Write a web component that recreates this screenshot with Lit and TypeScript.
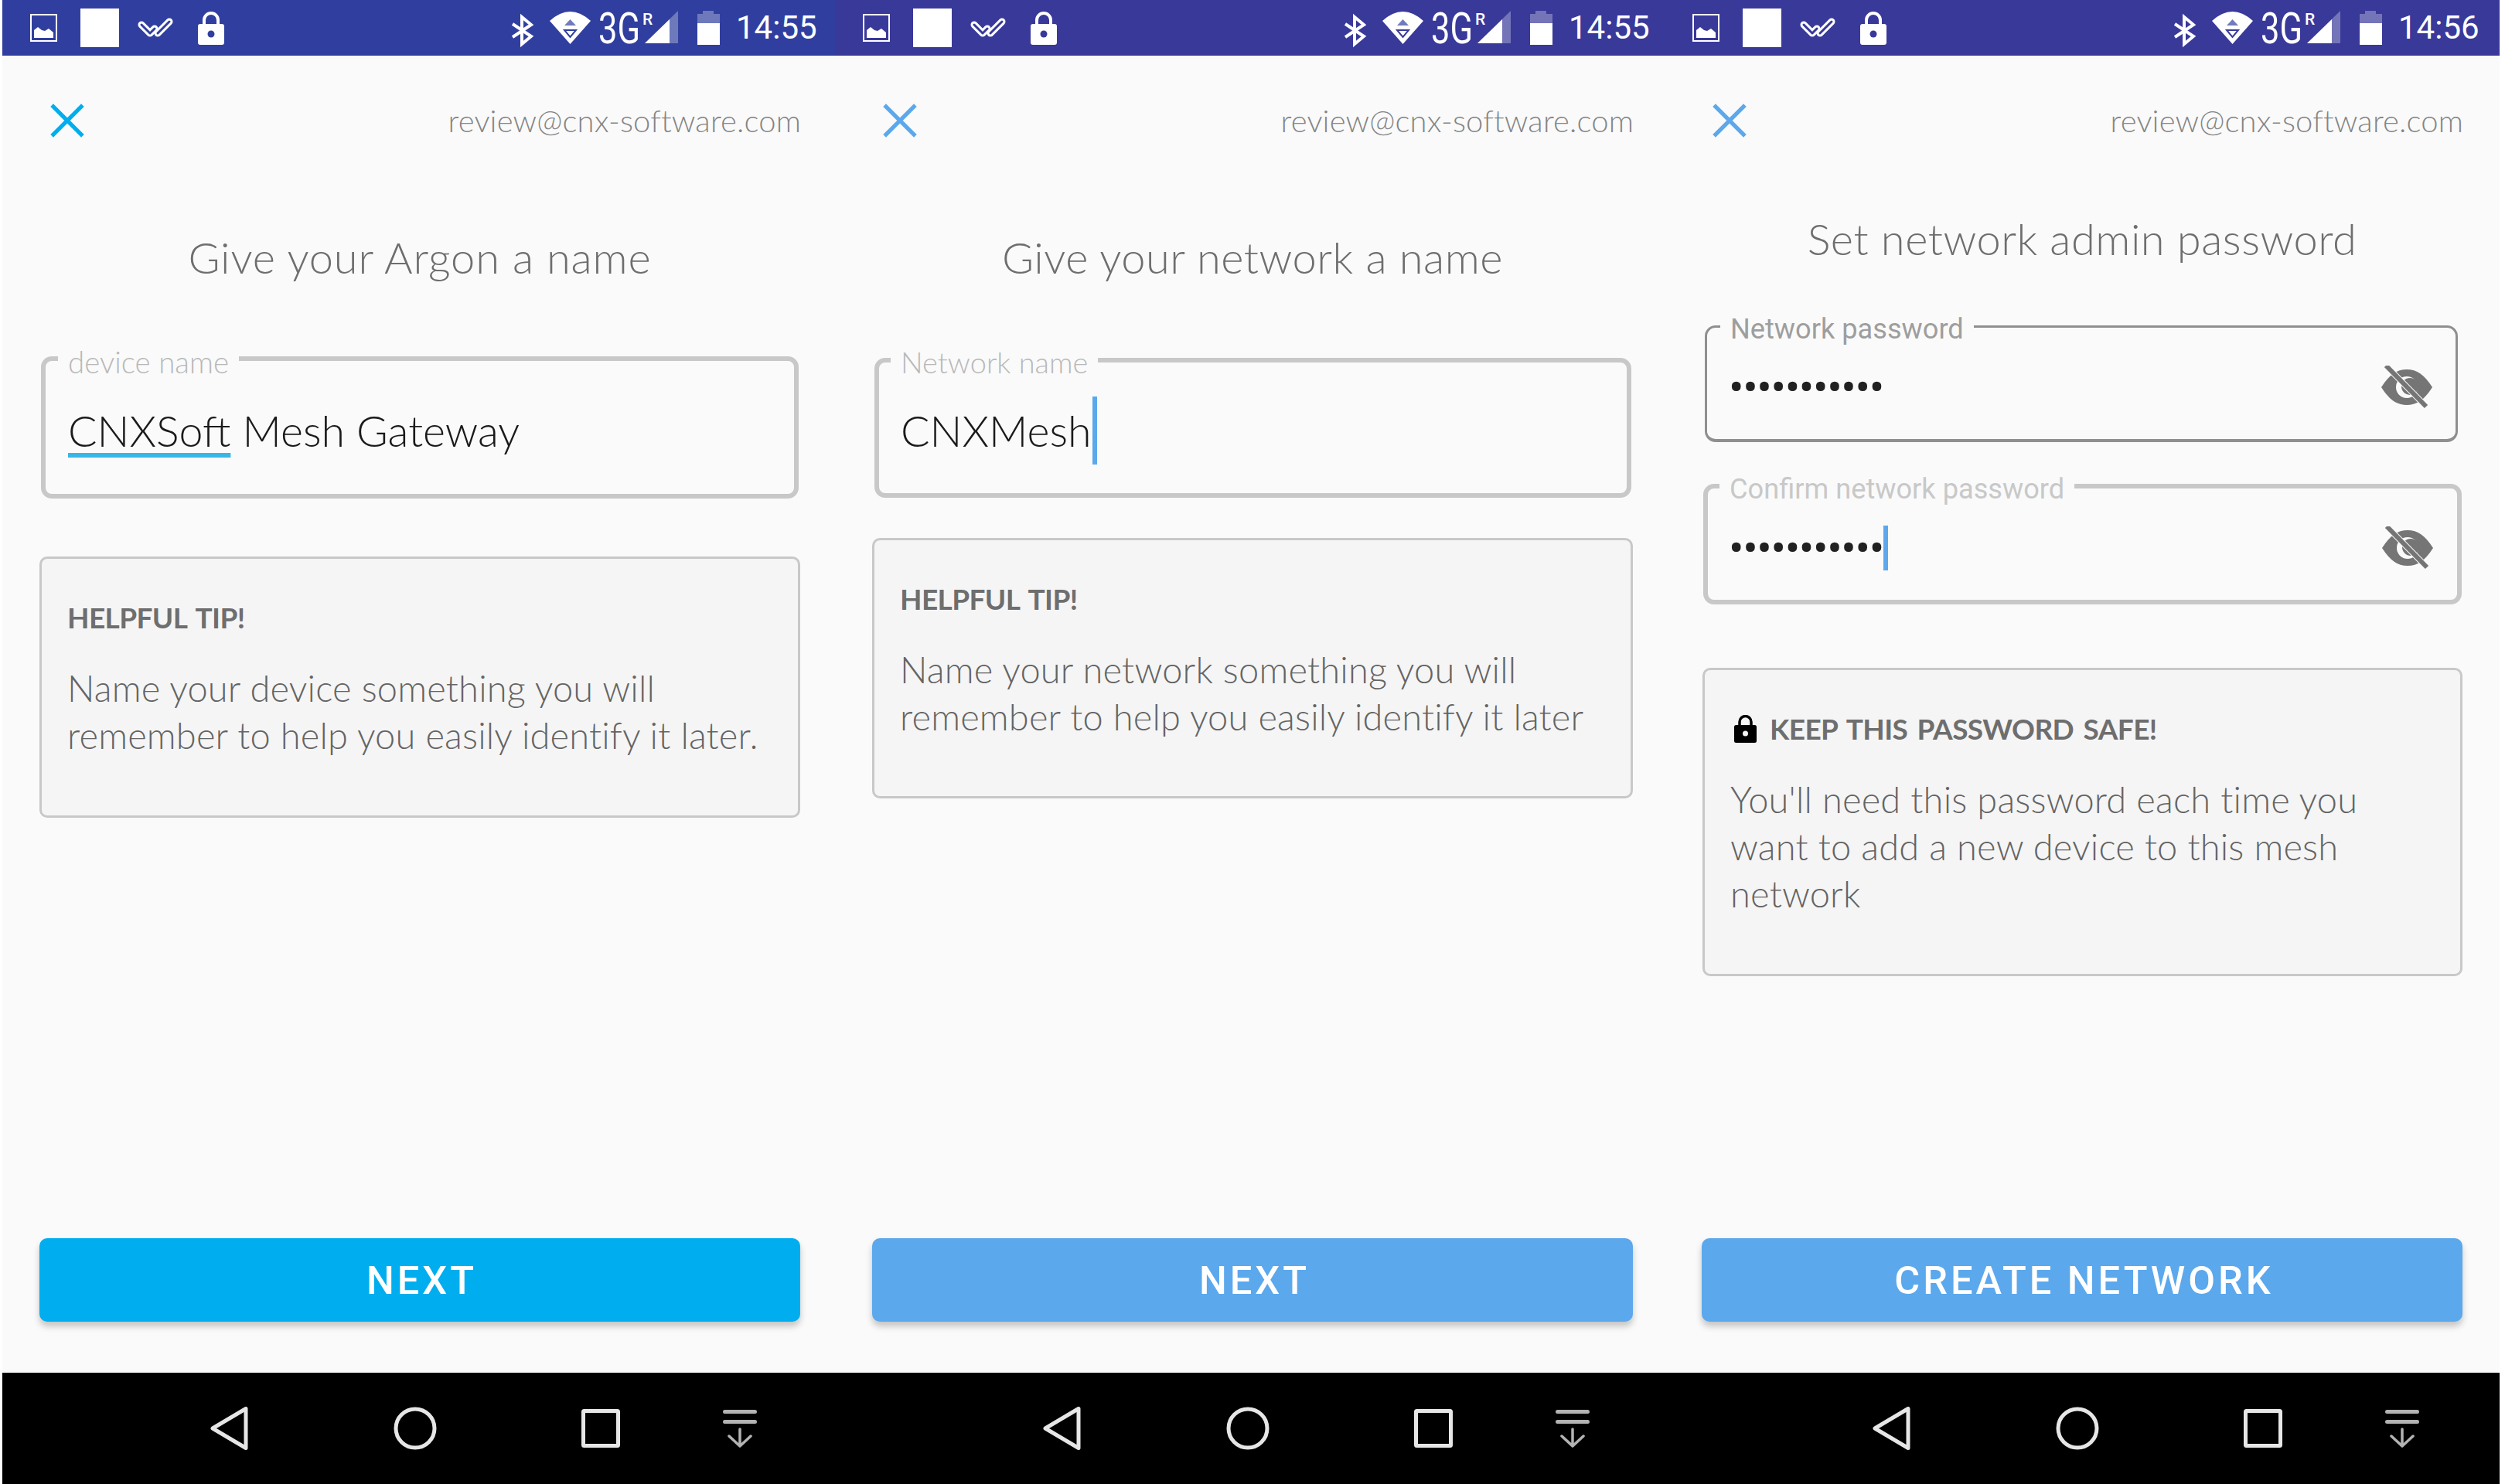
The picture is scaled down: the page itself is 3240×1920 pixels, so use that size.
import { LitElement, html, css, svg } from "lit";
import { customElement } from "lit/decorators.js";

const eye = svg`<svg class="eye" width="66" height="56" viewBox="0 0 66 56">
  <path d="M0 28 C10 12 20 5 33 5 C46 5 56 12 66 28 C56 44 46 51 33 51 C20 51 10 44 0 28Z" fill="#757575"/>
  <circle cx="33" cy="28" r="14" fill="#fafafa"/>
  <circle cx="37" cy="27" r="11" fill="#757575"/>
  <path d="M6 0 L58 53" stroke="#fafafa" stroke-width="8"/>
  <path d="M6 0 L58 53" stroke="#757575" stroke-width="6"/>
</svg>`;

function statusBar(time: string) {
  return html`<div class="status">
    <svg class="i-img" width="35" height="36" viewBox="0 0 35 36">
      <rect x="1" y="1" width="33" height="34" fill="none" stroke="#fff" stroke-width="2"/>
      <path d="M5 31 V21 L10 17 L15 21 L19 22 L24 19 L30 24 V31Z" fill="#fff"/>
    </svg>
    <div class="sq"></div>
    <svg class="i-check" width="46" height="26" viewBox="0 0 46 26">
      <g fill="none" stroke-linecap="round" stroke-linejoin="round">
        <path d="M5 9 L16 20 L22 14" stroke="#fff" stroke-width="9"/>
        <path d="M26 20 L41 5" stroke="#fff" stroke-width="9"/>
        <path d="M5 9 L16 20 L22 14" class="bar-s" stroke-width="3"/>
        <path d="M26 20 L41 5" class="bar-s" stroke-width="3"/>
      </g>
    </svg>
    <svg class="i-lock" width="34" height="44" viewBox="0 0 34 44">
      <path d="M8 20 V12 a9 9 0 0 1 18 0 V20" fill="none" stroke="#fff" stroke-width="4"/>
      <rect x="0" y="17" width="34" height="27" rx="3" fill="#fff"/>
      <circle cx="17" cy="30" r="4.5" class="bar-f"/>
    </svg>
    <svg class="cluster" width="270" height="72" viewBox="0 0 270 72">
      <path d="M1 31 L25 47 L13 57 V22 L25 32 L1 48" fill="none" stroke="#fff" stroke-width="4"/>
      <path d="M49 27 Q75.5 3 102 27 L75.5 57 Z" fill="#fff"/>
      <path d="M68 33 H83 L75.5 25Z" fill="#727bbd"/>
      <path d="M68 39 H83 L75.5 48Z" fill="#fff" class="bar-s" stroke-width="2"/>
      <text class="t3g" x="112" y="56" textLength="54" lengthAdjust="spacingAndGlyphs">3G</text>
      <text class="tr" x="169" y="32">R</text>
      <path d="M172 56 L215 14 V56Z" fill="#fff" opacity=".3"/>
      <path d="M172 56 L204 25 V56Z" fill="#fff"/>
      <path d="M247 14 H261 V18 H269 V30 H240 V18 H247Z" fill="#fff" opacity=".3"/>
      <rect x="240" y="30" width="29" height="28" fill="#fff"/>
    </svg>
    <span class="time">${time}</span>
  </div>`;
}

const nav = html`<div class="nav">
  <svg width="49" height="56" viewBox="0 0 49 56"><path d="M46 2.5 V53.5 L3 28Z" fill="none" stroke="#e6e6e6" stroke-width="5" stroke-linejoin="round"/></svg>
  <svg class="n-c" width="56" height="56" viewBox="0 0 56 56"><circle cx="28" cy="28" r="25" fill="none" stroke="#e6e6e6" stroke-width="5"/></svg>
  <svg class="n-s" width="50" height="50" viewBox="0 0 50 50"><rect x="2.5" y="2.5" width="45" height="45" rx="1" fill="none" stroke="#e6e6e6" stroke-width="5"/></svg>
  <svg class="n-m" width="44" height="49" viewBox="0 0 44 49">
    <path d="M2.5 2.5 H41.5 M2.5 15.5 H41.5" stroke="#b3b3b3" stroke-width="5" stroke-linecap="round"/>
    <path d="M22 25 V46 M8 34 L22 47 L36 34" fill="none" stroke="#b3b3b3" stroke-width="3.5" stroke-linecap="round" stroke-linejoin="round"/>
  </svg>
</div>`;

function header(color: string) {
  return html`<div class="head">
    <svg width="44" height="44" viewBox="0 0 42 42" style="color:${color}"><path d="M2 2 L40 40 M40 2 L2 40" fill="none" stroke="currentColor" stroke-width="5"/></svg>
    <span class="email">review@cnx-software.com</span>
  </div>`;
}

@customElement("app-root")
export class AppRoot extends LitElement {
  static styles = css`
    :host { display: block; width: 3240px; height: 1920px; background: #fff; overflow: hidden; }
    .row { display: flex; padding-left: 3px; align-items: stretch; }
    .panel { flex: 0 0 1080px; width: 1080px; height: 1920px; background: #fafafa; display: flex; flex-direction: column; box-sizing: border-box;
      font-family: Lato, "Noto Sans", sans-serif; color: #757575; --bar: #303f9f; }
    .p1 { margin-right: -3px; }
    .p2 { margin-right: -7px; --bar: #39399a; }
    .p3 { --bar: #39399a; }
    .bar-s { stroke: var(--bar); }
    .bar-f { fill: var(--bar); }

    .status { height: 72px; flex: none; background: var(--bar); display: flex; align-items: center; padding-left: 36px; box-sizing: border-box; }
    .sq { width: 50px; height: 50px; background: #fff; margin-left: 30px; }
    .i-check { margin-left: 24px; }
    .i-lock { margin-left: 32px; }
    .cluster { margin-left: 372px; flex: none; }
    .t3g { font: 400 56px Roboto, sans-serif; fill: #fff; }
    .tr { font: 500 21px Roboto, sans-serif; fill: #fff; }
    .time { font: 400 42px/72px Roboto, sans-serif; color: #fff; margin-left: 20px; white-space: nowrap; }

    .head { display: flex; justify-content: space-between; align-items: center; padding: 62px 47px 0 62px; height: 44px; flex: none; }
    .email { font-size: 40px; font-weight: 300; color: #858585; line-height: 42px; letter-spacing: .15px; }

    .title { text-align: center; font-size: 56px; font-weight: 300; line-height: 60px; color: #6e6e6e; letter-spacing: .5px; flex: none; white-space: nowrap; }
    .title.t12 { margin-top: 125px; }
    .title.t3 { margin-top: 101px; }
    .title.wide { letter-spacing: .85px; }

    .field { position: relative; box-sizing: border-box; flex: none; border: 6px solid #c8c8c8; border-radius: 14px; display: flex; align-items: center; }
    .legend { position: absolute; top: -19px; left: 16px; padding: 0 13px; background: #fafafa; line-height: 40px; font-size: 38.5px; font-weight: 300; color: #b8b8b8; white-space: nowrap; }
    .value { font-size: 55.5px; font-weight: 300; color: #1a1a1a; line-height: 60px; white-space: nowrap; display: flex; align-items: center; }
    .f1 { height: 184px; margin: 98px 50px 0 50px; padding: 8px 0 0 29px; }
    .f2 { height: 181px; margin: 100px 50px 0 51px; padding: 6px 0 0 28px; }
    .f2 .legend { font-size: 38px; left: 15px; top: -21px; }
    .under { text-decoration: underline; text-decoration-color: #38b6e8; text-decoration-thickness: 6px; text-underline-offset: 8px; text-decoration-skip-ink: none; }
    .caret { display: inline-block; width: 6px; background: #5ba8ec; flex: none; }
    .value .caret { height: 88px; margin-left: 1px; }
    .pw .legend { font-family: Roboto, sans-serif; font-weight: 400; font-size: 36.2px; left: 15px; color: #c8c8c8; }
    .pw { justify-content: space-between; }
    .pa { height: 151px; border: 3px solid #8f8f8f; border-bottom-width: 4px; margin: 82px 54px 0 52px; padding: 10px 30px 0 28px; }
    .pa .legend { color: #9e9e9e; top: -18px; left: 17px; }
    .pb { height: 156px; margin: 54px 49px 0 50px; padding: 10px 31px 0 27px; }
    .dots { font-family: Roboto, sans-serif; font-size: 58px; color: #212121; line-height: 60px; display: flex; align-items: center; }
    .dots span.txt { letter-spacing: -1.4px; }
    .dots .caret { height: 58px; margin-left: 0; }
    .eye { flex: none; }

    .card { box-sizing: border-box; flex: none; background: #f5f5f5; border: 3px solid #c8c8c8; border-radius: 10px; padding: 0 20px 0 33px; }
    .c1 { height: 338px; margin: 75px 48px 0 48px; padding-top: 54px; }
    .c2 { height: 337px; margin: 52px 48px 0 48px; padding-top: 54px; }
    .c3 { height: 399px; margin: 82px 48px 0 49px; padding-top: 54px; }
    .tip { font-size: 37px; font-weight: 700; line-height: 44px; color: #6e6e6e; display: flex; align-items: center; letter-spacing: -.6px; word-spacing: 4px; white-space: nowrap; }
    .tip svg { margin-right: 17px; margin-left: 5px; flex: none; }
    .body { font-size: 47px; font-weight: 300; line-height: 61px; color: #646464; margin-top: 39px; letter-spacing: .17px; white-space: pre; }

    .btn { margin: auto 48px 66px 48px; height: 108px; flex: none; border-radius: 10px; color: #fff; font-size: 50.5px; font-weight: 500; letter-spacing: 4px; padding-left: 5px;
      display: flex; align-items: center; justify-content: center; box-shadow: 0 6px 8px rgba(0,0,0,.22); font-family: Roboto, sans-serif; }
    .b1 { background: #00aeef; }
    .b2 { background: #5ba8ec; }

    .nav { height: 144px; flex: none; background: #000; display: flex; align-items: center; padding-left: 269px; }
    .n-c { margin-left: 188px; }
    .n-s { margin-left: 187px; }
    .n-m { margin-left: 133px; }
  `;

  render() {
    return html`<div class="row">
      <section class="panel p1">
        ${statusBar("14:55")}
        ${header("#00aeef")}
        <div class="title t12 wide">Give your Argon a name</div>
        <div class="field f1">
          <span class="legend">device name</span>
          <span class="value"><span><span class="under">CNXSoft</span> Mesh Gateway</span></span>
        </div>
        <div class="card c1">
          <div class="tip">HELPFUL TIP!</div>
          <div class="body">Name your device something you will
remember to help you easily identify it later.</div>
        </div>
        <div class="btn b1">NEXT</div>
        ${nav}
      </section>
      <section class="panel p2">
        ${statusBar("14:55")}
        ${header("#5ba8ec")}
        <div class="title t12">Give your network a name</div>
        <div class="field f2">
          <span class="legend">Network name</span>
          <span class="value">CNXMesh<i class="caret"></i></span>
        </div>
        <div class="card c2">
          <div class="tip">HELPFUL TIP!</div>
          <div class="body">Name your network something you will
remember to help you easily identify it later</div>
        </div>
        <div class="btn b2">NEXT</div>
        ${nav}
      </section>
      <section class="panel p3">
        ${statusBar("14:56")}
        ${header("#5ba8ec")}
        <div class="title t3">Set network admin password</div>
        <div class="field pw pa">
          <span class="legend">Network password</span>
          <span class="dots"><span class="txt">•••••••••••</span></span>
          ${eye}
        </div>
        <div class="field pw pb">
          <span class="legend">Confirm network password</span>
          <span class="dots"><span class="txt">•••••••••••</span><i class="caret"></i></span>
          ${eye}
        </div>
        <div class="card c3">
          <div class="tip"><svg width="29" height="36" viewBox="0 0 29 36"><path d="M7 15 V9 a7.5 7.5 0 0 1 15 0 V15" fill="none" stroke="#000" stroke-width="3.5"/><rect x="0" y="13" width="29" height="23" rx="2.5"/><circle cx="14.5" cy="24" r="3.5" fill="#f5f5f5"/></svg>KEEP THIS PASSWORD SAFE!</div>
          <div class="body">You'll need this password each time you
want to add a new device to this mesh
network</div>
        </div>
        <div class="btn b2">CREATE NETWORK</div>
        ${nav}
      </section>
    </div>`;
  }
}
